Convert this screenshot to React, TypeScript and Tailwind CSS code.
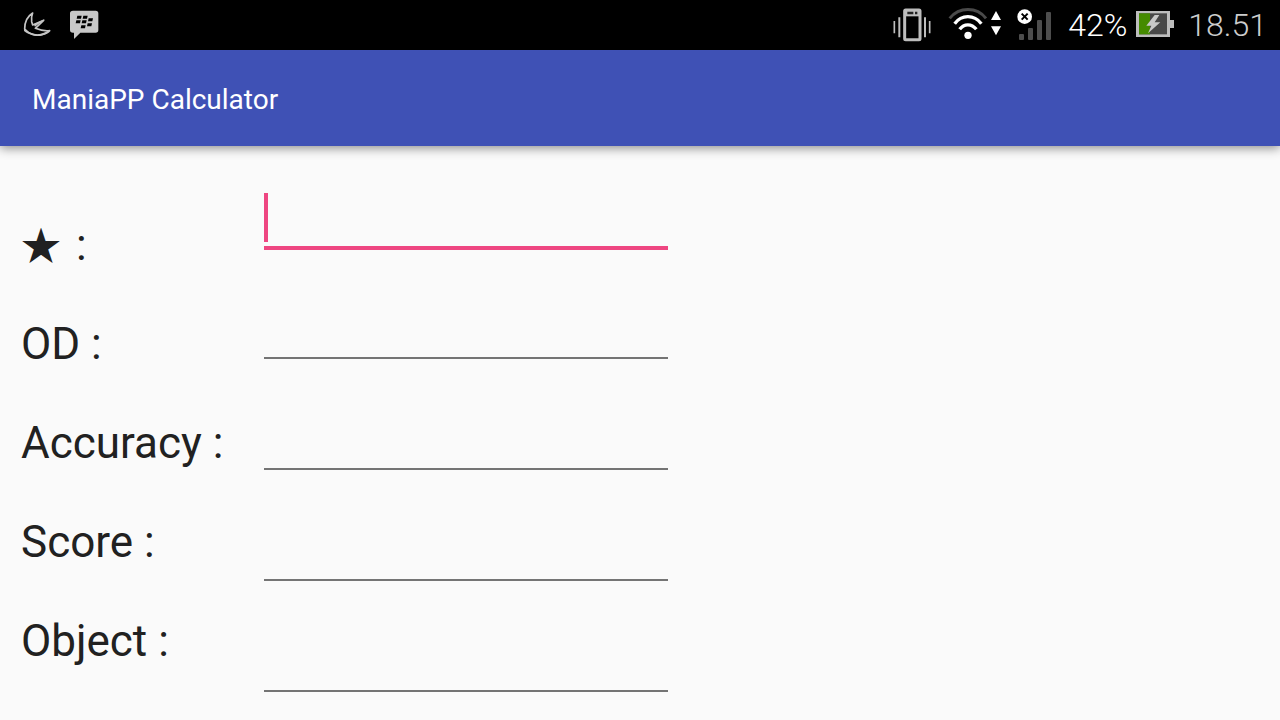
import React, { useState, ChangeEvent } from "react";

const fields = [
  { id: "star", label: "★ :" },
  { id: "od", label: "OD :" },
  { id: "accuracy", label: "Accuracy :" },
  { id: "score", label: "Score :" },
  { id: "object", label: "Object :" },
];

const BirdIcon = () => (
  <svg className="h-[30px] w-[30px]" viewBox="66 33 90 90" fill="none">
    <path
      d="M98 42C82 52 74 70 74 90C86 105 108 112 124 107C137 104 146 99 149 95C136 97 124 95 106 88L131 64L98 78L95 68Q93 54 98 42Z"
      stroke="#c4c4c4"
      strokeWidth="5"
      strokeLinejoin="round"
    />
    <path d="M72 88C88 104 108 108 124 104L150 94C142 105 132 109 120 111C101 112 82 105 72 96Z" fill="#c4c4c4" />
    <path d="M101 76L135 60L105 83Z" fill="#c4c4c4" />
  </svg>
);

const ChatIcon = () => (
  <svg className="h-[30px] w-[30px]" viewBox="207 31 90 90" fill="#c8c8c8">
    <path d="M219 33H287Q295 33 295 41V91Q295 99 287 99H241L222 118V99H219Q210 99 210 91V41Q210 33 219 33Z" />
    <path
      d="M232 48h13l-2 9h-13zM250 48h13l-2 9h-13zM229 62h13l-2 9h-13zM247 62h13l-2 9h-13zM266 56h13l-2 9h-13zM263 71h13l-2 9h-13zM244 77h13l-2 9h-13z"
      fill="#000"
    />
  </svg>
);

const VibrateIcon = () => (
  <svg className="h-9 w-10" viewBox="38 24 120 108" fill="none" stroke="#bdbdbd">
    <path d="M45 66V103M151 66V103" strokeWidth="5" />
    <path d="M60 55V115M137 55V115" strokeWidth="6" />
    <rect x="76" y="33" width="46" height="89" rx="3" strokeWidth="9" />
    <path d="M76 42H122" strokeWidth="20" />
    <path d="M84 42H102M107 42H114" stroke="#222" strokeWidth="7" />
  </svg>
);

const WifiIcon = () => (
  <svg className="h-9 w-[54px]" viewBox="203 24 162 108" fill="none" stroke="#fff">
    <path d="M208 58C237 23 289 23 317 58" stroke="#4a4a4a" strokeWidth="9" />
    <path d="M223 74C244 46 281 46 303 74" strokeWidth="10" />
    <path d="M238 91C251 73 274 73 288 91" strokeWidth="10" />
    <circle cx="263" cy="109" r="11" fill="#fff" stroke="none" />
    <path d="M347 36L362 63H332ZM332 82H362L347 109Z" fill="#fff" stroke="none" />
  </svg>
);

const SignalIcon = () => (
  <svg className="h-9 w-9" viewBox="408 24 108 108" fill="#4d4d4d">
    <rect x="417" y="105" width="15" height="18" rx="3" />
    <rect x="444" y="87" width="15" height="36" rx="3" />
    <rect x="471" y="63" width="15" height="60" rx="3" />
    <rect x="498" y="39" width="15" height="84" rx="3" />
    <circle cx="434" cy="53" r="22" fill="#fff" />
    <path d="M425 44L443 62M443 44L425 62" stroke="#000" strokeWidth="6" />
  </svg>
);

const BatteryIcon = () => (
  <svg className="h-9 w-10" viewBox="225 24 120 108">
    <path d="M228 36H330V63H342V87H330V114H228Z" fill="#bdbdbd" />
    <rect x="237" y="43" width="84" height="63" fill="#484848" />
    <rect x="237" y="43" width="33" height="63" fill="#458b00" />
    <path d="M284 48L259 80H274L264 103L301 70H284L298 48Z" fill="#c8c8c8" />
  </svg>
);

const App: React.FC = () => {
  const [values, setValues] = useState<Record<string, string>>({});

  const handleChange = (event: ChangeEvent<HTMLInputElement>) => {
    setValues({ ...values, [event.target.id]: event.target.value });
  };

  return (
    <div className="min-h-screen bg-[#fafafa] font-['Roboto','Noto_Sans_CJK_JP',sans-serif]">
      {/* Status bar */}
      <div className="flex h-[50px] items-center justify-between bg-black pr-[13px] pl-[22px]">
        <div className="flex items-center gap-[17px]">
          <BirdIcon />
          <ChatIcon />
        </div>
        <div className="flex items-center text-[32px] leading-9 font-light">
          <VibrateIcon />
          <span className="ml-4">
            <WifiIcon />
          </span>
          <span className="ml-[14px]">
            <SignalIcon />
          </span>
          <span className="ml-4 text-white">42%</span>
          <span className="ml-2">
            <BatteryIcon />
          </span>
          <span className="ml-[13px] text-[#cccccc]">18.51</span>
        </div>
      </div>

      {/* App bar */}
      <header className="relative flex h-24 items-center bg-[#3f51b5] px-8 pt-[3px] shadow-[0_2px_10px_rgba(0,0,0,0.45)]">
        <h1 className="text-[28px] leading-8 text-white">ManiaPP Calculator</h1>
      </header>

      {/* Form */}
      <form className="flex pl-[21px]">
        <div className="flex w-[243px] shrink-0 flex-col gap-12 pt-[74px]">
          {fields.map((field) => (
            <label
              key={field.id}
              htmlFor={field.id}
              className="h-[51px] text-[44px] leading-[51px] text-[#212121]"
            >
              {field.id === "star" ? (
                <>
                  <span className="pr-1 text-[40px]">★</span> :
                </>
              ) : (
                field.label
              )}
            </label>
          ))}
        </div>
        <div className="flex w-[404px] flex-col gap-[54px] pt-[47px]">
          {fields.map((field, index) => (
            <div key={field.id} className="relative h-[57px]">
              <input
                id={field.id}
                type="text"
                autoComplete="off"
                autoFocus={index === 0}
                value={values[field.id] || ""}
                onChange={handleChange}
                className="peer block h-[55px] w-full border-b-2 border-[#747474] bg-transparent text-4xl text-[#212121] caret-transparent outline-none focus:h-[57px] focus:border-b-4 focus:border-[#ee4681]"
              />
              {/* thick cursor */}
              <span className="absolute top-0 left-0 hidden h-[49px] w-1 bg-[#ee4681] peer-focus:block"></span>
            </div>
          ))}
        </div>
      </form>
    </div>
  );
};

export default App;
